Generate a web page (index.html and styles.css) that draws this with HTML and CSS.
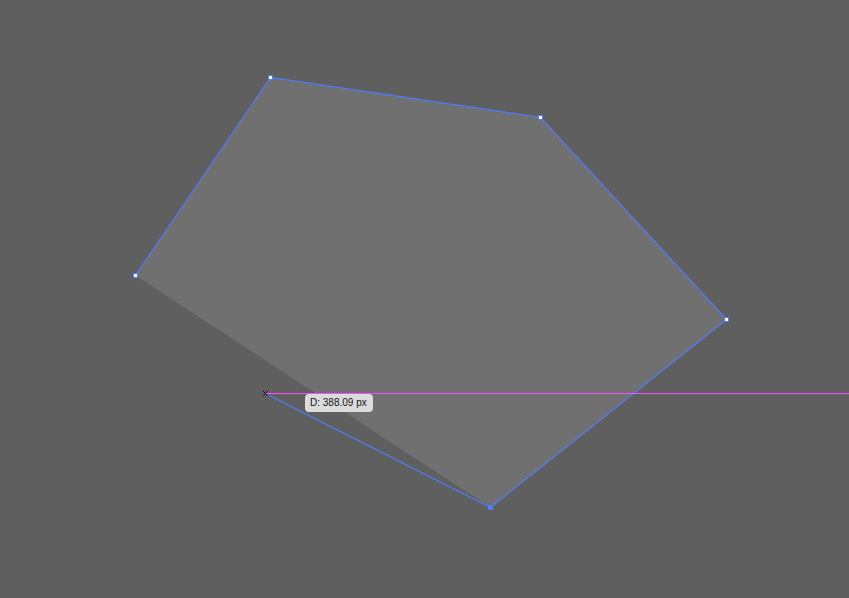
FILE: index.html
```html
<!DOCTYPE html>
<html>
<head>
<meta charset="utf-8">
<link rel="stylesheet" href="styles.css">
</head>
<body>
<div class="canvas">
  <svg class="art" width="849" height="598" viewBox="0 0 849 598">
    <polygon points="270.5,77.5 540.5,117.5 726.5,319.5 490.5,507.5 135.5,275.5" fill="#707070"/>
    <polyline points="135.5,275.5 270.5,77.5 540.5,117.5 726.5,319.5 490.5,507.5 265.5,393.5" fill="none" stroke="#4f7cff" stroke-width="1.2"/>
    <line x1="266" y1="393.5" x2="849" y2="393.5" stroke="#ff4dff" stroke-width="1"/>
    <g fill="#ffffff" stroke="#4f7cff" stroke-width="1">
      <rect x="268.5" y="75.5" width="4" height="4"/>
      <rect x="538.5" y="115.5" width="4" height="4"/>
      <rect x="724.5" y="317.5" width="4" height="4"/>
      <rect x="133.5" y="273.5" width="4" height="4"/>
    </g>
    <rect x="488" y="505" width="5" height="5" fill="#4f7cff"/>
    <g stroke="#111" stroke-width="1">
      <line x1="263" y1="391" x2="268" y2="396"/>
      <line x1="268" y1="391" x2="263" y2="396"/>
    </g>
  </svg>
  <div class="tip">D: 388.09 px</div>
</div>
</body>
</html>
```
FILE: styles.css
```css
html, body {
  margin: 0;
  padding: 0;
  background: #5f5f5f;
  overflow: hidden;
}
.canvas {
  position: relative;
  width: 849px;
  height: 598px;
}
.art {
  position: absolute;
  left: 0;
  top: 0;
  display: block;
}
.tip {
  position: absolute;
  left: 305px;
  top: 394px;
  height: 18px;
  line-height: 18px;
  padding: 0 6px 0 5px;
  background: #dcdcdc;
  border-radius: 4px;
  font-family: "Liberation Sans", Arial, sans-serif;
  font-size: 10px;
  color: #111;
  white-space: nowrap;
}
```
